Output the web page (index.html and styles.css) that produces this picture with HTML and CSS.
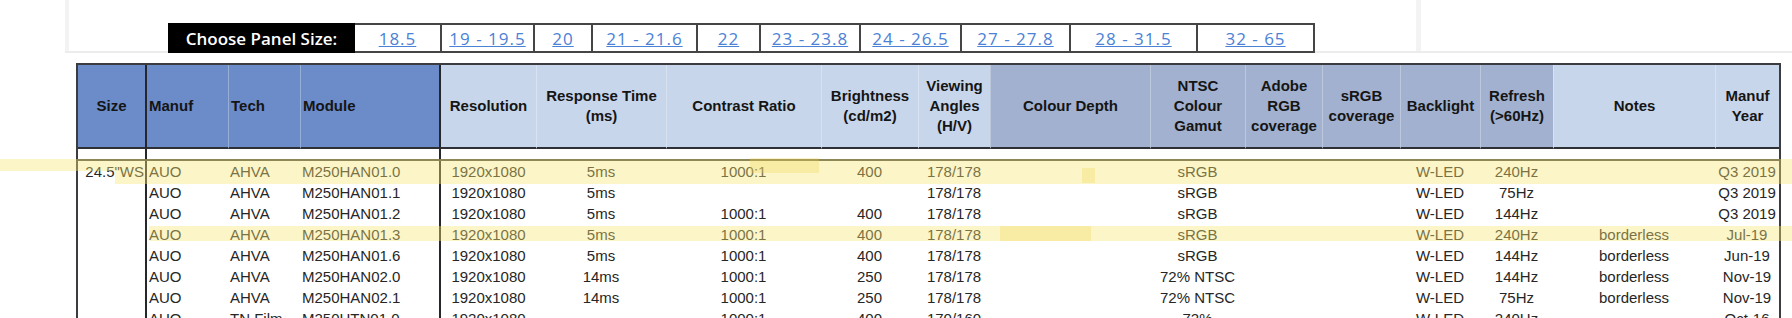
FILE: index.html
```html
<!DOCTYPE html>
<html lang="en">
<head>
    <meta charset="UTF-8">
    <meta name="viewport" content="width=device-width, initial-scale=1.0">
    <title>Panel Database - 24.5"</title>
    <link rel="stylesheet" href="styles.css">
</head>
<body>
    <!-- Size selector -->
    <div class="top">
        <div class="frame">
            <nav class="size-nav">
                <span class="nav-title">Choose Panel Size:</span>
                <a href="#">18.5</a>
                <a href="#">19 - 19.5</a>
                <a href="#">20</a>
                <a href="#">21 - 21.6</a>
                <a href="#">22</a>
                <a href="#">23 - 23.8</a>
                <a href="#">24 - 26.5</a>
                <a href="#">27 - 27.8</a>
                <a href="#">28 - 31.5</a>
                <a href="#">32 - 65</a>
            </nav>
        </div>
    </div>

    <!-- Panel table -->
    <div class="sheet">
        <table class="panels">
            <colgroup>
                <col class="w67"><col class="w83"><col class="w72"><col class="w139">
                <col class="w97"><col class="w130"><col class="w155"><col class="w97">
                <col class="w72"><col class="w160"><col class="w95"><col class="w77">
                <col class="w78"><col class="w80"><col class="w73"><col class="w162">
                <col class="w64">
            </colgroup>
            <thead>
                <tr>
                    <th>Size</th>
                    <th>Manuf</th>
                    <th>Tech</th>
                    <th>Module</th>
                    <th>Resolution</th>
                    <th>Response Time<br>(ms)</th>
                    <th>Contrast Ratio</th>
                    <th>Brightness<br>(cd/m2)</th>
                    <th>Viewing<br>Angles<br>(H/V)</th>
                    <th>Colour Depth</th>
                    <th>NTSC<br>Colour<br>Gamut</th>
                    <th>Adobe<br>RGB<br>coverage</th>
                    <th>sRGB<br>coverage</th>
                    <th>Backlight</th>
                    <th>Refresh<br>(&gt;60Hz)</th>
                    <th>Notes</th>
                    <th>Manuf<br>Year</th>
                </tr>
            </thead>
            <tbody>
                <tr class="gap">
                    <td></td><td></td><td></td><td></td><td></td><td></td><td></td><td></td><td></td>
                    <td></td><td></td><td></td><td></td><td></td><td></td><td></td><td></td>
                </tr>
                <tr>
                    <td>24.5"WS</td><td>AUO</td><td>AHVA</td><td>M250HAN01.0</td><td>1920x1080</td><td>5ms</td>
                    <td>1000:1</td><td>400</td><td>178/178</td><td></td><td>sRGB</td><td></td><td></td>
                    <td>W-LED</td><td>240Hz</td><td></td><td>Q3 2019</td>
                </tr>
                <tr>
                    <td></td><td>AUO</td><td>AHVA</td><td>M250HAN01.1</td><td>1920x1080</td><td>5ms</td>
                    <td></td><td></td><td>178/178</td><td></td><td>sRGB</td><td></td><td></td>
                    <td>W-LED</td><td>75Hz</td><td></td><td>Q3 2019</td>
                </tr>
                <tr>
                    <td></td><td>AUO</td><td>AHVA</td><td>M250HAN01.2</td><td>1920x1080</td><td>5ms</td>
                    <td>1000:1</td><td>400</td><td>178/178</td><td></td><td>sRGB</td><td></td><td></td>
                    <td>W-LED</td><td>144Hz</td><td></td><td>Q3 2019</td>
                </tr>
                <tr>
                    <td></td><td>AUO</td><td>AHVA</td><td>M250HAN01.3</td><td>1920x1080</td><td>5ms</td>
                    <td>1000:1</td><td>400</td><td>178/178</td><td></td><td>sRGB</td><td></td><td></td>
                    <td>W-LED</td><td>240Hz</td><td>borderless</td><td>Jul-19</td>
                </tr>
                <tr>
                    <td></td><td>AUO</td><td>AHVA</td><td>M250HAN01.6</td><td>1920x1080</td><td>5ms</td>
                    <td>1000:1</td><td>400</td><td>178/178</td><td></td><td>sRGB</td><td></td><td></td>
                    <td>W-LED</td><td>144Hz</td><td>borderless</td><td>Jun-19</td>
                </tr>
                <tr>
                    <td></td><td>AUO</td><td>AHVA</td><td>M250HAN02.0</td><td>1920x1080</td><td>14ms</td>
                    <td>1000:1</td><td>250</td><td>178/178</td><td></td><td>72% NTSC</td><td></td><td></td>
                    <td>W-LED</td><td>144Hz</td><td>borderless</td><td>Nov-19</td>
                </tr>
                <tr>
                    <td></td><td>AUO</td><td>AHVA</td><td>M250HAN02.1</td><td>1920x1080</td><td>14ms</td>
                    <td>1000:1</td><td>250</td><td>178/178</td><td></td><td>72% NTSC</td><td></td><td></td>
                    <td>W-LED</td><td>75Hz</td><td>borderless</td><td>Nov-19</td>
                </tr>
                <tr>
                    <td></td><td>AUO</td><td>TN Film</td><td>M250HTN01.0</td><td>1920x1080</td><td></td>
                    <td>1000:1</td><td>400</td><td>170/160</td><td></td><td>72%</td><td></td><td></td>
                    <td>W-LED</td><td>240Hz</td><td></td><td>Oct-16</td>
                </tr>
            </tbody>
        </table>

        <!-- highlighter marks -->
        <div class="hl hl-r1-top"></div>
        <div class="hl hl-r1-low"></div>
        <div class="hl hl-r1-dab1"></div>
        <div class="hl hl-r1-dab2"></div>
        <div class="hl hl-r4"></div>
        <div class="hl hl-r4-dab"></div>
    </div>
</body>
</html>
```

FILE: styles.css
```css
* {
    box-sizing: border-box;
}

html, body {
    margin: 0;
    overflow: hidden;
    background: #fff;
}

body {
    font-family: "Liberation Sans", Arial, sans-serif;
    color: #262626;
}

/* Верхняя панель */
.top {
    margin-left: 65px;
    height: 53px;
    border-bottom: 2px solid #ececec;
}

.frame {
    width: 1356px;
    height: 51px;
    border-left: 4px solid #f3f3f3;
    border-right: 5px solid #f3f3f3;
    padding: 23px 0 0 99px;
}

.size-nav {
    display: grid;
    grid-template-columns: 187px 87px 93px 58px 105px 63px 100px 101px 109px 127px 117px;
    height: 30px;
    font-family: "Open Sans", sans-serif;
    font-size: 17px;
}

.nav-title,
.size-nav a {
    display: flex;
    align-items: center;
    justify-content: center;
    border-top: 2px solid #454545;
    border-bottom: 2px solid #454545;
}

.nav-title {
    background: #000;
    border-color: #000;
    color: #fff;
    font-weight: 600;
}

.size-nav a {
    background: #fff;
    color: #4c82d6;
    letter-spacing: 1px;
    border-right: 2px solid #454545;
}

/* Таблица */
.sheet {
    position: relative;
    padding: 10px 0 0 76px;
}

.panels {
    table-layout: fixed;
    width: 1705px;
    border-collapse: separate;
    border-spacing: 0;
    border: 2px solid #3a3c40;
    border-bottom: 0;
    font-size: 15px;
}

.w64 { width: 64px; }
.w67 { width: 67px; }
.w72 { width: 72px; }
.w73 { width: 73px; }
.w77 { width: 77px; }
.w78 { width: 78px; }
.w80 { width: 80px; }
.w83 { width: 83px; }
.w95 { width: 95px; }
.w97 { width: 97px; }
.w130 { width: 130px; }
.w139 { width: 139px; }
.w155 { width: 155px; }
.w160 { width: 160px; }
.w162 { width: 162px; }

.panels th {
    height: 84px;
    padding: 0 2px;
    background: #c8d6eb;
    color: #151515;
    font-weight: bold;
    line-height: 20px;
    border-bottom: 2px solid #2e3035;
    border-left: 1px solid rgba(255,255,255,0.3);
}

.panels th:first-child {
    border-left: 0;
}

.panels th:nth-child(-n+4) {
    background: #6b8bc9;
}

.panels th:nth-child(n+10):nth-child(-n+15) {
    background: #a1b1cf;
}

.panels th:nth-child(2),
.panels th:nth-child(3),
.panels th:nth-child(4) {
    text-align: left;
}

/* толстые разделители */
.panels th:nth-child(2),
.panels th:nth-child(5),
.panels td:nth-child(2),
.panels td:nth-child(5) {
    border-left: 2px solid #25272b;
}

.panels td {
    height: 21px;
    padding: 0 2px;
    line-height: 21px;
    text-align: center;
    white-space: nowrap;
}

.panels td:nth-child(1) {
    text-align: right;
    padding-right: 1px;
}

.panels td:nth-child(2),
.panels td:nth-child(3),
.panels td:nth-child(4) {
    text-align: left;
}

.panels .gap td {
    height: 12px;
    border-bottom: 2px solid #4a4843;
}

/* Маркер */
.hl {
    position: absolute;
    background: rgba(247,230,115,0.4);
    pointer-events: none;
}

.hl-r1-top { left: 0; right: 0; top: 106px; height: 12px; }
.hl-r1-low { left: 115px; right: 0; top: 118px; height: 13px; }
.hl-r1-dab1 { left: 750px; width: 69px; top: 105px; height: 15px; background: rgba(240,212,80,0.3); }
.hl-r1-dab2 { left: 1082px; width: 13px; top: 115px; height: 15px; background: rgba(240,212,80,0.3); }
.hl-r4 { left: 149px; right: 0; top: 173px; height: 15px; }
.hl-r4-dab { left: 1000px; width: 91px; top: 173px; height: 15px; background: rgba(240,212,80,0.3); }
```
